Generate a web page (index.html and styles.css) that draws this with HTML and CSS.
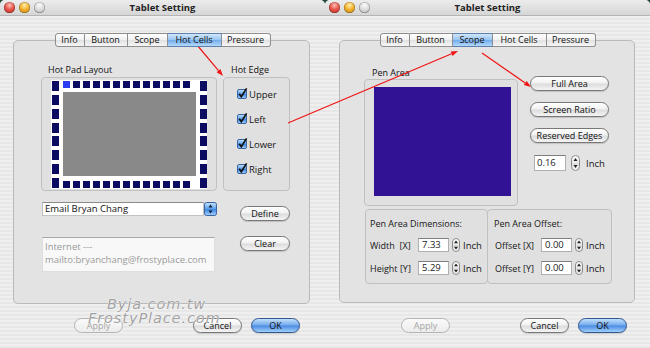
FILE: index.html
```html
<!DOCTYPE html>
<html>
<head>
<meta charset="utf-8">
<link rel="stylesheet" href="styles.css">
</head>
<body>
<svg class="defs" width="0" height="0">
  <defs>
    <linearGradient id="cbg" x1="0" y1="0" x2="0" y2="1">
      <stop offset="0" stop-color="#c8e4ff"/>
      <stop offset="0.5" stop-color="#5a9de9"/>
      <stop offset="0.55" stop-color="#3f86e0"/>
      <stop offset="1" stop-color="#a6d4ff"/>
    </linearGradient>
    <linearGradient id="sg" x1="0" y1="0" x2="0" y2="1">
      <stop offset="0" stop-color="#ffffff"/>
      <stop offset="0.5" stop-color="#e9e9e9"/>
      <stop offset="0.55" stop-color="#dcdcdc"/>
      <stop offset="1" stop-color="#f7f7f7"/>
    </linearGradient>
  </defs>
</svg>

<div class="desk">
  <!-- LEFT WINDOW -->
  <div class="window">
    <div class="titlebar">
      <div class="lights"><span class="light red"></span><span class="light yellow"></span><span class="light grey"></span></div>
      <div class="title">Tablet Setting</div>
      <div class="tspacer"></div>
    </div>
    <div class="tabs">
      <span class="tab w-info">Info</span><span class="tab w-button">Button</span><span class="tab w-scope">Scope</span><span class="tab w-hot sel">Hot Cells</span><span class="tab w-press">Pressure</span>
    </div>
    <div class="panel panel-left">
      <div class="hp-row">
        <div class="hotpad-col">
          <div class="glabel gl-hot">Hot Pad Layout</div>
          <div class="gbox hotpad">
            <div class="pad">
              <div class="pad-side">
                <i class="cs"></i><i class="cs"></i><i class="cs"></i><i class="cs"></i><i class="cs"></i><i class="cs"></i><i class="cs"></i><i class="cs"></i>
              </div>
              <div class="pad-mid">
                <div class="pad-row">
                  <i class="ct on"></i><i class="ct"></i><i class="ct"></i><i class="ct"></i><i class="ct"></i><i class="ct"></i><i class="ct"></i><i class="ct"></i><i class="ct"></i><i class="ct"></i><i class="ct"></i><i class="ct"></i><i class="ct"></i>
                </div>
                <div class="pad-screen"></div>
                <div class="pad-row">
                  <i class="ct"></i><i class="ct"></i><i class="ct"></i><i class="ct"></i><i class="ct"></i><i class="ct"></i><i class="ct"></i><i class="ct"></i><i class="ct"></i><i class="ct"></i><i class="ct"></i><i class="ct"></i><i class="ct"></i>
                </div>
              </div>
              <div class="pad-side">
                <i class="cs"></i><i class="cs"></i><i class="cs"></i><i class="cs"></i><i class="cs"></i><i class="cs"></i><i class="cs"></i><i class="cs"></i>
              </div>
            </div>
          </div>
        </div>
        <div class="edge-col">
          <div class="glabel gl-edge">Hot Edge</div>
          <div class="gbox edges">
            <div class="chk"><svg width="10" height="10" viewBox="0 0 10 10"><rect x="0.5" y="0.5" width="9" height="9" rx="1.5" fill="url(#cbg)" stroke="#3a64a0"/><path d="M2.2 4.8 L4.3 7.8 L9.6 -0.6" fill="none" stroke="#111" stroke-width="1.7"/></svg><span>Upper</span></div>
            <div class="chk"><svg width="10" height="10" viewBox="0 0 10 10"><rect x="0.5" y="0.5" width="9" height="9" rx="1.5" fill="url(#cbg)" stroke="#3a64a0"/><path d="M2.2 4.8 L4.3 7.8 L9.6 -0.6" fill="none" stroke="#111" stroke-width="1.7"/></svg><span>Left</span></div>
            <div class="chk"><svg width="10" height="10" viewBox="0 0 10 10"><rect x="0.5" y="0.5" width="9" height="9" rx="1.5" fill="url(#cbg)" stroke="#3a64a0"/><path d="M2.2 4.8 L4.3 7.8 L9.6 -0.6" fill="none" stroke="#111" stroke-width="1.7"/></svg><span>Lower</span></div>
            <div class="chk"><svg width="10" height="10" viewBox="0 0 10 10"><rect x="0.5" y="0.5" width="9" height="9" rx="1.5" fill="url(#cbg)" stroke="#3a64a0"/><path d="M2.2 4.8 L4.3 7.8 L9.6 -0.6" fill="none" stroke="#111" stroke-width="1.7"/></svg><span>Right</span></div>
          </div>
        </div>
      </div>
      <div class="row-popup">
        <div class="popup">
          <span class="popup-field">Email Bryan Chang</span>
          <span class="popup-btn"><svg width="13" height="14" viewBox="0 0 13 14"><rect x="0.5" y="0.5" width="12" height="13" rx="2" fill="url(#cbg)" stroke="#3a64a0"/><path d="M6.5 2.5 L8.5 5.5 H4.5Z M6.5 11.5 L8.5 8.5 H4.5Z" fill="#10203a"/></svg></span>
        </div>
        <span class="btn btn-define">Define</span>
      </div>
      <div class="row-text">
        <div class="textarea">Internet ---<br>mailto:bryanchang@frostyplace.com</div>
        <span class="btn btn-clear">Clear</span>
      </div>
    </div>
    <div class="actions act-left">
      <span class="btn btn-apply">Apply</span>
      <span class="btn btn-cancel">Cancel</span>
      <span class="btn btn-ok">OK</span>
    </div>
  </div>

  <!-- RIGHT WINDOW -->
  <div class="window">
    <div class="titlebar">
      <div class="lights"><span class="light red"></span><span class="light yellow"></span><span class="light grey"></span></div>
      <div class="title">Tablet Setting</div>
      <div class="tspacer"></div>
    </div>
    <div class="tabs">
      <span class="tab w-info">Info</span><span class="tab w-button">Button</span><span class="tab w-scope sel">Scope</span><span class="tab w-hot">Hot Cells</span><span class="tab w-press">Pressure</span>
    </div>
    <div class="panel panel-right">
      <div class="scope-top">
        <div class="pen-col">
          <div class="glabel gl-pen">Pen Area</div>
          <div class="gbox penbox"><div class="pen-area"></div></div>
        </div>
        <div class="btn-col">
          <span class="btn btn-wide">Full Area</span>
          <span class="btn btn-wide">Screen Ratio</span>
          <span class="btn btn-wide">Reserved Edges</span>
          <div class="num-row">
            <span class="field f-edge">0.16</span>
            <svg class="stepper" width="9" height="16" viewBox="0 0 9 16"><rect x="0.5" y="0.5" width="8" height="15" rx="4" fill="url(#sg)" stroke="#8a8a8a"/><path d="M4.5 3 L6.5 6 H2.5Z M4.5 13 L6.5 10 H2.5Z" fill="#222"/></svg>
            <span class="unit">Inch</span>
          </div>
        </div>
      </div>
      <div class="dims-row">
        <div class="gbox dbox dbox-dim">
          <div class="dtitle">Pen Area Dimensions:</div>
          <div class="drow">
            <span class="dlabel">Width&nbsp; [X]</span><span class="field f-small">7.33</span>
            <svg class="stepper-s" width="8" height="14" viewBox="0 0 8 14"><rect x="0.5" y="0.5" width="7" height="13" rx="3.5" fill="url(#sg)" stroke="#8a8a8a"/><path d="M4 2.5 L6 5.2 H2Z M4 11.5 L6 8.8 H2Z" fill="#222"/></svg>
            <span class="unit-s">Inch</span>
          </div>
          <div class="drow">
            <span class="dlabel">Height [Y]</span><span class="field f-small">5.29</span>
            <svg class="stepper-s" width="8" height="14" viewBox="0 0 8 14"><rect x="0.5" y="0.5" width="7" height="13" rx="3.5" fill="url(#sg)" stroke="#8a8a8a"/><path d="M4 2.5 L6 5.2 H2Z M4 11.5 L6 8.8 H2Z" fill="#222"/></svg>
            <span class="unit-s">Inch</span>
          </div>
        </div>
        <div class="gbox dbox dbox-off">
          <div class="dtitle">Pen Area Offset:</div>
          <div class="drow">
            <span class="dlabel dl-off">Offset [X]</span><span class="field f-small">0.00</span>
            <svg class="stepper-s" width="8" height="14" viewBox="0 0 8 14"><rect x="0.5" y="0.5" width="7" height="13" rx="3.5" fill="url(#sg)" stroke="#8a8a8a"/><path d="M4 2.5 L6 5.2 H2Z M4 11.5 L6 8.8 H2Z" fill="#222"/></svg>
            <span class="unit-s">Inch</span>
          </div>
          <div class="drow">
            <span class="dlabel dl-off">Offset [Y]</span><span class="field f-small">0.00</span>
            <svg class="stepper-s" width="8" height="14" viewBox="0 0 8 14"><rect x="0.5" y="0.5" width="7" height="13" rx="3.5" fill="url(#sg)" stroke="#8a8a8a"/><path d="M4 2.5 L6 5.2 H2Z M4 11.5 L6 8.8 H2Z" fill="#222"/></svg>
            <span class="unit-s">Inch</span>
          </div>
        </div>
      </div>
    </div>
    <div class="actions act-right">
      <span class="btn btn-apply">Apply</span>
      <span class="btn btn-cancel">Cancel</span>
      <span class="btn btn-ok">OK</span>
    </div>
  </div>
</div>

<div class="watermark wm1">Byja.com.tw</div>
<div class="watermark wm2">FrostyPlace.com</div>

<svg class="arrows" width="650" height="348" viewBox="0 0 650 348">
  <g stroke="#f01414" stroke-width="1.2" fill="none">
    <line x1="192" y1="39" x2="218.5" y2="70.6"/>
    <line x1="288" y1="123" x2="451.6" y2="53.7"/>
    <line x1="482" y1="53" x2="525.2" y2="83"/>
  </g>
  <g fill="#f01414">
    <polygon points="223,76 216.6,72.2 220.4,69"/>
    <polygon points="458,51 452.6,56 450.6,51.4"/>
    <polygon points="531,87 523.8,85.1 526.7,80.9"/>
  </g>
</svg>
</body>
</html>
```

FILE: styles.css
```css
* { box-sizing: border-box; margin: 0; padding: 0; }

html, body { width: 650px; height: 348px; overflow: hidden; }

body {
  background: #1e4a35;
  font-family: "Open Sans", "Noto Sans", sans-serif;
  font-size: 9px;
  line-height: 11px;
  color: #161616;
  position: relative;
}

.defs { position: absolute; width: 0; height: 0; }

.desk { display: flex; }

.window {
  width: 325px;
  height: 348px;
  border-radius: 5px 5px 0 0;
  overflow: hidden;
  background: repeating-linear-gradient(to bottom, #efefef 0, #efefef 2px, #e7e7e7 2px, #e7e7e7 4px);
}

/* title bar */
.titlebar {
  height: 16px;
  display: flex;
  align-items: center;
  background: linear-gradient(#ececec, #d6d6d6);
  border-bottom: 1px solid #b4b4b4;
}
.lights { width: 48px; display: flex; gap: 4px; padding-left: 4px; }
.tspacer { width: 48px; }
.light {
  width: 11px; height: 11px; border-radius: 50%;
  box-shadow: inset 0 0 0 0.5px rgba(0,0,0,0.35);
}
.red { background: radial-gradient(circle at 50% 30%, #ffc0b8 0, #e8574d 45%, #b3261c 100%); }
.yellow { background: radial-gradient(circle at 50% 30%, #fff0b0 0, #f3b331 45%, #c07f05 100%); }
.grey { background: radial-gradient(circle at 50% 30%, #fbfbfb 0, #dadada 50%, #a9a9a9 100%); }
.title {
  flex: 1;
  text-align: center;
  font-weight: bold;
  font-size: 9.5px;
  color: #222;
}

/* tabs */
.tabs {
  position: relative;
  z-index: 1;
  display: flex;
  justify-content: center;
  margin-top: 17px;
  height: 14px;
}
.tab {
  height: 14px;
  border: 1px solid #8e8e8e;
  border-left: none;
  background: linear-gradient(#ffffff, #f0f0f0 50%, #e2e2e2 52%, #f6f6f6);
  text-align: center;
  line-height: 12px;
  font-size: 9px;
  color: #111;
}
.tab:first-child { border-left: 1px solid #8e8e8e; border-radius: 3px 0 0 3px; }
.tab:last-child { border-radius: 0 3px 3px 0; }
.tab.sel {
  background: linear-gradient(#d2e7fc, #96c4f2 50%, #72aced 52%, #b4dafc);
  border-top-color: #5c7fae;
  border-bottom-color: #5c7fae;
}
.w-info { width: 30px; }
.w-button { width: 43px; }
.w-scope { width: 40px; }
.w-hot { width: 54px; }
.w-press { width: 49px; }

/* panel */
.panel {
  margin-top: -7px;
  border: 1px solid #bababa;
  border-radius: 5px;
  background: #e3e3e3;
}
.panel-left {
  margin-left: 13px;
  width: 297px;
  height: 264px;
  padding: 23px 0 0 27px;
}
.panel-right {
  margin-left: 14px;
  width: 296px;
  height: 263px;
  padding: 26px 0 0 24px;
}

.glabel { height: 11px; color: #111; }
.gl-hot { padding-left: 7px; }
.gl-edge { padding-left: 8px; }
.gl-pen { padding-left: 8px; }

.gbox {
  border: 1px solid #c0c0c0;
  border-radius: 4px;
  background: #e0e0e0;
}

/* hot pad */
.hp-row { display: flex; gap: 6px; }
.hotpad-col { width: 176px; }
.edge-col { width: 67px; }
.hotpad {
  margin-top: 2px;
  height: 114px;
  padding: 2px 9px 1px;
}
.pad {
  width: 156px;
  height: 109px;
  background: #fff;
  display: flex;
  gap: 4px;
  padding: 1px 0 1px 1px;
}
.pad-side {
  width: 7px;
  display: flex;
  flex-direction: column;
  justify-content: space-between;
}
.cs { display: block; width: 7px; height: 10px; background: #0b0b62; }
.pad-mid { width: 133px; display: flex; flex-direction: column; }
.pad-row { display: flex; gap: 3px; height: 7px; }
.ct { display: block; width: 7px; height: 7px; background: #0b0b62; }
.ct.on { background: #2b3df2; }
.pad-screen { flex: 1; background: #898989; margin: 4px 0 5px; }

/* hot edge */
.edges {
  margin-top: 2px;
  height: 114px;
  padding: 11px 0 0 13px;
}
.chk {
  display: flex;
  align-items: center;
  gap: 2px;
  height: 10px;
  margin-bottom: 15px;
  font-size: 9.5px;
}
.chk svg { overflow: visible; flex: none; }

/* popup row */
.row-popup { display: flex; align-items: flex-start; margin-top: 11px; }
.popup { display: flex; width: 175px; height: 14px; margin-left: 1px; }
.popup-field {
  width: 162px;
  height: 14px;
  background: #fff;
  border: 1px solid #c2c2c2;
  border-top-color: #8a8a8a;
  padding-left: 2px;
  line-height: 12px;
  font-size: 9.5px;
  color: #111;
}
.popup-btn { width: 13px; height: 14px; }
.popup-btn svg { display: block; }

.row-text { display: flex; align-items: flex-start; margin-top: 15px; }
.textarea {
  margin: 1px 0 0 1px;
  width: 173px;
  height: 35px;
  background: #f8f8f8;
  border: 1px solid #dedede;
  border-top-color: #a8a8a8;
  padding: 2px 0 0 2px;
  font-size: 9.5px;
  line-height: 13px;
  color: #9a9a9a;
}

/* buttons */
.btn {
  display: inline-block;
  height: 15px;
  border: 1px solid #777;
  border-radius: 8px;
  background: linear-gradient(#ffffff, #f1f1f1 48%, #dcdcdc 52%, #f4f4f4);
  text-align: center;
  line-height: 13px;
  font-size: 9px;
  color: #111;
  box-shadow: 0 1px 1px rgba(0,0,0,0.15);
}
.btn-define { width: 50px; margin: 4px 0 0 23px; }
.btn-clear { width: 50px; margin-left: 25px; }
.btn-apply {
  width: 49px;
  color: #a4a4a4;
  border-color: #b4b4b4;
  background: linear-gradient(#fafafa, #ececec);
  box-shadow: none;
}
.btn-cancel { width: 49px; margin-left: 70px; }
.btn-ok {
  width: 49px;
  margin-left: 9px;
  border-color: #32568e;
  background: linear-gradient(#c3dffb, #74aaee 48%, #4a8ae3 52%, #9fd0fb);
  font-weight: normal;
}

.actions { display: flex; margin-top: 14px; }
.act-left { padding-left: 74px; }
.act-right { padding-left: 76px; margin-top: 15px; }

/* scope panel */
.scope-top { display: flex; }
.pen-col { width: 154px; }
.penbox {
  margin-top: 1px;
  height: 127px;
  padding: 7px 6px 9px 9px;
}
.pen-area { width: 137px; height: 109px; background: #321294; }

.btn-col {
  margin-left: 12px;
  padding-top: 9px;
  display: flex;
  flex-direction: column;
  gap: 11px;
  width: 80px;
}
.btn-wide { width: 79px; }
.num-row { display: flex; align-items: center; margin: 1px 0 0 4px; }
.field {
  display: inline-block;
  background: #fff;
  border: 1px solid #b0b0b0;
  border-top-color: #7e7e7e;
  font-size: 9.5px;
  color: #222;
}
.f-edge { width: 32px; height: 16px; line-height: 14px; padding-left: 2px; }
.stepper { margin-left: 5px; flex: none; }
.unit { margin-left: 6px; font-size: 9.5px; }

.dims-row { display: flex; margin: 3px 0 0 1px; }
.dbox { height: 75px; padding-top: 8px; }
.dbox-dim { width: 123px; padding-left: 4px; }
.dbox-off { width: 125px; margin-left: -1px; padding-left: 6px; }
.dtitle { height: 11px; font-size: 9px; }
.drow { display: flex; align-items: center; height: 14px; margin-top: 9px; }
.dlabel { width: 48px; font-size: 9px; }
.dl-off { width: 47px; padding-left: 1px; }
.f-small { width: 31px; height: 14px; line-height: 12px; padding-left: 3px; }
.stepper-s { margin-left: 3px; flex: none; }
.unit-s { margin-left: 3px; font-size: 9.5px; }

/* watermark */
.watermark {
  position: absolute;
  font-family: "DejaVu Sans", sans-serif;
  font-style: italic;
  font-size: 14.5px;
  line-height: 16px;
  letter-spacing: 0.9px;
  color: #a2a2a2;
  text-shadow: 0 0 1px #fff, 0 0 1px #fff;
}
.wm1 { left: 107px; top: 296px; }
.wm2 { left: 88px; top: 310px; }

.arrows { position: absolute; left: 0; top: 0; pointer-events: none; }
```
